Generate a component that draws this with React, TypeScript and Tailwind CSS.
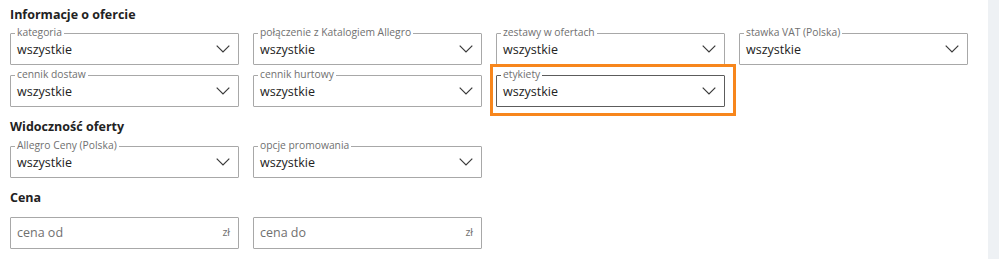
import React from 'react'

const FONT = "font-['Open_Sans','Noto_Sans',sans-serif]"

interface SelectFieldProps {
  label: string
  value?: string
  focused?: boolean
}

function Chevron() {
  return (
    <svg width="14" height="8" viewBox="0 0 14 8" fill="none" className="shrink-0">
      <path d="M0.7 0.7L7 7L13.3 0.7" stroke="#3a3a3a" strokeWidth="1.2" />
    </svg>
  )
}

function SelectField({ label, value = 'wszystkie', focused }: SelectFieldProps) {
  return (
    <div
      className={`relative flex h-[32px] items-center justify-between rounded-[1px] border pl-[6px] pr-[8px] ${
        focused ? 'border-[#5c5c5c]' : 'border-[#a8a8a8]'
      }`}
    >
      <span className="absolute -top-[8px] left-[4px] bg-white px-[2px] text-[10.3px] leading-[13px] text-[#707070]">
        {label}
      </span>
      <span className="pt-[2px] text-[12.5px] text-[#222]">{value}</span>
      <Chevron />
    </div>
  )
}

function PriceInput({ placeholder }: { placeholder: string }) {
  return (
    <div className="flex h-[32px] items-center justify-between rounded-[1px] border border-[#a8a8a8] pl-[6px] pr-[8px]">
      <span className="text-[12.5px] text-[#707070]">{placeholder}</span>
      <span className="text-[10.5px] text-[#707070]">zł</span>
    </div>
  )
}

function SectionTitle({ children }: { children: React.ReactNode }) {
  return <h2 className="text-[12.5px] font-bold leading-[16px] text-[#222]">{children}</h2>
}

const GRID = 'grid grid-cols-[229px_229px_229px_229px] gap-x-[14px] gap-y-[10px]'

export default function App() {
  return (
    <div className={`flex h-[259px] w-full bg-white ${FONT}`}>
      <div className="flex-1 pl-[10px] pt-[7px]">
        <SectionTitle>Informacje o ofercie</SectionTitle>
        <div className={`${GRID} mt-[10px]`}>
          <SelectField label="kategoria" />
          <SelectField label="połączenie z Katalogiem Allegro" />
          <SelectField label="zestawy w ofertach" />
          <SelectField label="stawka VAT (Polska)" />
          <SelectField label="cennik dostaw" />
          <SelectField label="cennik hurtowy" />
          <div className="relative">
            <SelectField label="etykiety" focused />
            {/* zaznaczenie */}
            <div className="pointer-events-none absolute -bottom-[9px] -left-[6px] -right-[11px] -top-[11px] border-[3px] border-[#f7861c]" />
          </div>
        </div>

        <div className="mt-[12px]">
          <SectionTitle>Widoczność oferty</SectionTitle>
        </div>
        <div className={`${GRID} mt-[11px]`}>
          <SelectField label="Allegro Ceny (Polska)" />
          <SelectField label="opcje promowania" />
        </div>

        <div className="mt-[12px]">
          <SectionTitle>Cena</SectionTitle>
        </div>
        <div className={`${GRID} mt-[11px]`}>
          <PriceInput placeholder="cena od" />
          <PriceInput placeholder="cena do" />
        </div>
      </div>
      <div className="w-[11px] bg-[#eef1f4]" />
    </div>
  )
}
